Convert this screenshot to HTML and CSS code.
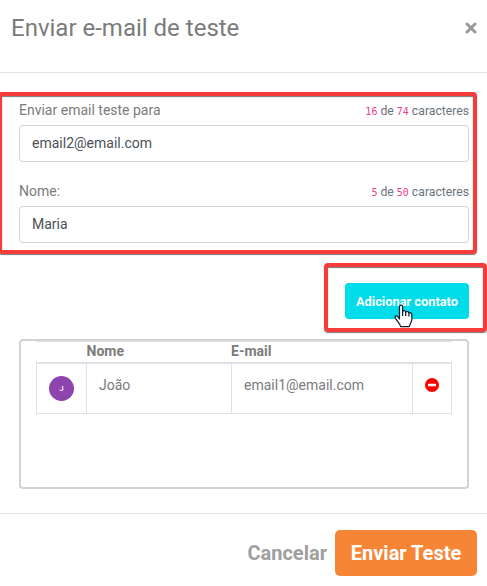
FILE: index.html
```html
<!DOCTYPE html>
<html lang="pt-BR">
<head>
<meta charset="utf-8">
<title>Enviar e-mail de teste</title>
<link rel="stylesheet" href="styles.css">
</head>
<body>
<div class="modal">
  <header class="modal-header">
    <h1 class="title">Enviar e-mail de teste</h1>
    <button class="close" aria-label="Fechar"><svg width="12" height="12" viewBox="0 0 12 12"><path d="M2 2 10 10M10 2 2 10"/></svg></button>
  </header>
  <main class="modal-body">
    <div class="field">
      <div class="field-head"><label for="email">Enviar email teste para</label><small><code>16</code> de <code>74</code> caracteres</small></div>
      <input id="email" class="control" value="email2@email.com">
    </div>
    <div class="field">
      <div class="field-head"><label for="nome">Nome:</label><small><code>5</code> de <code>50</code> caracteres</small></div>
      <input id="nome" class="control" value="Maria">
    </div>
    <div class="actions"><button class="add">Adicionar contato</button></div>
    <div class="panel">
      <div class="row head"><span></span><span>Nome</span><span>E-mail</span><span></span></div>
      <div class="row contact">
        <div class="cell"><span class="avatar">J</span></div>
        <div class="cell">João</div>
        <div class="cell">email1@email.com</div>
        <div class="cell"><svg class="remove" width="14" height="14" viewBox="0 0 14 14"><circle cx="7" cy="7" r="7" fill="#f00"/><rect x="3" y="5.7" width="8" height="2.6" rx=".4" fill="#fff"/></svg></div>
      </div>
    </div>
  </main>
  <footer class="modal-footer">
    <button class="cancel">Cancelar</button>
    <button class="send">Enviar Teste</button>
  </footer>
  <div class="mark mark-fields"></div>
  <div class="mark mark-add"></div>
  <svg class="pointer" width="19" height="24" viewBox="0 0 19 24"><path d="M5.5 15V2.8C5.5.5 8.6.5 8.6 2.8V7.3C9.8 6.2 11.6 6.8 11.7 8 13 7 14.8 7.7 14.9 9 16.4 8.2 17.8 9.2 17.8 10.7V15.5C17.8 18 16 19.6 15.3 22.6H6.6C6 19.5 3.5 17.5 1.5 14.2.4 12.2 2.3 11 3.7 12.5Z" fill="#fff" stroke="#111827" stroke-width="1.2" stroke-linejoin="round"/><path d="M8.6 7V12M11.7 8V12M14.9 9V12.5" stroke="#111827" stroke-width="1.2"/></svg>
</div>
</body>
</html>
```

FILE: styles.css
```css
* { box-sizing: border-box; }
body { margin: 0; background: #fff; font-family: Roboto, sans-serif; color: #7b7b7b; overflow: hidden; }
button { font-family: inherit; border: 0; padding: 0; background: none; }
.modal { position: relative; width: 487px; height: 586px; overflow: hidden; }
.modal-header { height: 73px; padding: 12px 10px 0 11px; border-bottom: 1px solid #dee2e6; display: flex; justify-content: space-between; }
.title { margin: 0; font-size: 24px; font-weight: 400; line-height: 32px; white-space: nowrap; }
.close { height: 32px; display: flex; align-items: center; }
.close svg { fill: none; stroke: #999; stroke-width: 3; stroke-linecap: round; }
.modal-body { height: 440px; padding: 27px 18px 0 19px; }
.field { height: 81px; }
.field-head { height: 25px; display: flex; justify-content: space-between; line-height: 20px; font-size: 14px; white-space: nowrap; }
small { font-size: 12.2px; line-height: 22px; color: #6c757d; }
code { font: 10px/1 "DejaVu Sans Mono", monospace; color: #e83e8c; }
.control { display: block; width: 100%; height: 37px; padding: 0 12px 2px; border: 1px solid #ced4da; border-radius: 4px; background: #fff; font: 14px Roboto, sans-serif; color: #495057; outline: 0; }
.actions { height: 77px; padding-top: 21px; display: flex; justify-content: flex-end; align-items: flex-start; }
.add { width: 124px; height: 36px; border-radius: 4px; background: #00dce9; color: #fff; font-size: 12.8px; font-weight: 700; white-space: nowrap; }
.panel { height: 150px; padding: 0 15px; border: 2px solid #d3d3d3; border-radius: 4px; }
.row { display: grid; grid-template-columns: 50.5px 144.5px 181px 40px; font-size: 14px; }
.head { height: 23px; border-top: 1px solid #dee2e6; border-bottom: 2px solid #dee2e6; line-height: 19px; font-weight: 700; }
.contact { height: 50px; border: 1px solid #dee2e6; border-top: 0; grid-template-columns: 50px 145px 181px 38px; }
.cell { padding: 12px; line-height: 19px; border-right: 1px solid #dee2e6; }
.cell:last-child { border-right: 0; }
.avatar { display: block; width: 25px; height: 25px; border-radius: 50%; background: #8e44ad; color: #fff; font-size: 8px; font-weight: 500; line-height: 25px; text-align: center; }
.remove { display: block; margin-top: 2px; }
.modal-footer { height: 73px; padding: 16px 10px 0; border-top: 1px solid #e2e2e2; display: flex; justify-content: flex-end; gap: 8px; font-size: 20px; }
.cancel, .send { height: 46px; font-size: 20px; font-weight: 700; }
.cancel { color: #9f9f9f; }
.send { width: 142px; border-radius: 5px; background: #f78536; color: #fff; }
.mark { position: absolute; border: 4px solid #f63b3b; border-radius: 4px; box-shadow: 0 1px 1px #777, inset 0 1px 1px #777; }
.mark-fields { left: -2px; top: 92px; width: 479px; height: 162px; }
.mark-add { left: 324px; top: 263px; width: 163px; height: 69px; }
.pointer { position: absolute; left: 394px; top: 304px; }
```
